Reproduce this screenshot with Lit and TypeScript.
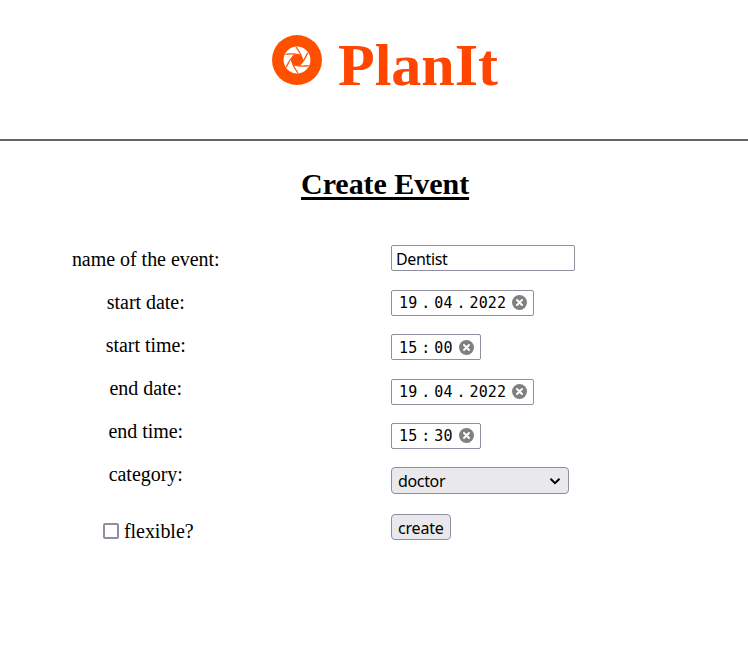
import { LitElement, html, css, svg } from "lit";
import { customElement, property } from "lit/decorators.js";

const clearIcon = svg`<svg class="clear" viewBox="0 0 15 15" width="15" height="15"><circle cx="7.5" cy="7.5" r="7.5" fill="#808080"/><path d="M5 5l5 5M10 5l-5 5" stroke="#fff" stroke-width="2" stroke-linecap="round"/></svg>`;

@customElement("segment-field")
export class SegmentField extends LitElement {
  @property({ type: Array }) parts: string[] = [];
  @property() separator = ".";

  static styles = css`
    :host {
      display: flex;
      align-items: center;
      box-sizing: border-box;
      height: 26px;
      padding: 0 6px 0 7px;
      border: 1px solid #8f8f9d;
      border-radius: 2px;
      background: #fff;
      font: 15px/24px "DejaVu Sans Mono", monospace;
      color: #000;
    }
    .part { padding-top: 1px; white-space: pre; letter-spacing: 0.1px; }
    .sep { width: 17px; padding-top: 1px; text-align: center; }
    .clear { display: block; margin-left: 6px; }
  `;

  render() {
    return html`${this.parts.map(
      (p, i) => html`${i ? html`<span class="sep">${this.separator}</span>` : ""}<span class="part">${p}</span>`
    )}${clearIcon}`;
  }
}

@customElement("app-root")
export class AppRoot extends LitElement {
  static styles = css`
    :host {
      display: block;
      height: 650px;
      overflow: hidden;
      background: #fff;
      color: #000;
      font-family: "Liberation Serif", serif;
    }
    header {
      display: flex;
      box-sizing: border-box;
      height: 141px;
      padding: 35px 0 0 272px;
      border-bottom: 2px solid #66666a;
    }
    .logo { display: block; flex: none; }
    h1 {
      margin: -4px 0 0 16px;
      font-size: 60px;
      line-height: 69px;
      color: #ff4500;
      letter-spacing: 0;
    }
    h2 {
      width: 168px;
      margin: 26px 0 0 301px;
      font-size: 30px;
      line-height: 34px;
      letter-spacing: -0.04px;
      white-space: nowrap;
      text-decoration: underline;
      text-decoration-thickness: 3px;
      text-underline-offset: 3px;
      text-decoration-skip-ink: none;
    }
    form { display: flex; margin-top: 44px; }
    .labels {
      display: flex;
      flex-direction: column;
      align-items: center;
      width: 291.5px;
      margin-right: 99.5px;
      padding-top: 3px;
      gap: 20px;
      font-size: 20px;
      line-height: 23px;
      letter-spacing: -0.03px;
    }
    .check { display: flex; align-items: center; margin-top: 14px; padding-left: 5px; gap: 5px; }
    .box {
      box-sizing: border-box;
      width: 16px;
      height: 16px;
      margin-top: -1px;
      border: 2px solid #8f8f9d;
      border-radius: 2px;
    }
    .fields { display: flex; flex-direction: column; align-items: flex-start; padding-top: 0.4px; gap: 18.4px; }
    .text, .select, .button {
      display: flex;
      align-items: center;
      box-sizing: border-box;
      height: 26px;
      border: 1px solid #8f8f9d;
      font: 16px/24px "Noto Sans", sans-serif;
      letter-spacing: -0.35px;
    }
    .text { width: 184px; padding: 2px 0 0 4px; border-radius: 2px; }
    .select {
      justify-content: space-between;
      width: 178px;
      height: 27px;
      padding: 1px 7px 0 6px;
      border-radius: 4px;
      background: #e9e9ed;
    }
    .button { width: 60px; margin-top: 1.2px; padding: 2px 0 0 6px; border-radius: 4px; background: #e9e9ed; letter-spacing: -0.2px; }
  `;

  private labels = ["name of the event:", "start date:", "start time:", "end date:", "end time:", "category:"];

  render() {
    return html`
      <header>
        <svg class="logo" width="50" height="50" viewBox="-25 -25 50 50">
          <circle r="25" fill="#ff5000" />
          <circle r="13.4" fill="#fff" />
          <path d="M6.2 0L3.1 5.4H-3.1L-6.2 0L-3.1 -5.4H3.1Z" fill="#ff5000" />
          ${[0, 60, 120, 180, 240, 300].map(
            (a) => svg`<path transform="rotate(${a})" d="M3.1 -4.8Q-4 -6.9 -11.6 -5.6" fill="none" stroke="#ff5000" stroke-width="1.2"/>`
          )}
        </svg>
        <h1>PlanIt</h1>
      </header>
      <h2>Create Event</h2>
      <form>
        <div class="labels">
          ${this.labels.map((l) => html`<label>${l}</label>`)}
          <label class="check"><span class="box"></span>flexible?</label>
        </div>
        <div class="fields">
          <div class="text">Dentist</div>
          <segment-field .parts=${["19", "04", "2022"]}></segment-field>
          <segment-field .parts=${["15", "00"]} separator=":"></segment-field>
          <segment-field .parts=${["19", "04", "2022"]}></segment-field>
          <segment-field .parts=${["15", "30"]} separator=":"></segment-field>
          <div class="select">
            doctor
            <svg width="12" height="8" viewBox="0 0 12 8"><path d="M1.5 1.7L6 6.2L10.5 1.7" fill="none" stroke="#000" stroke-width="2" /></svg>
          </div>
          <div class="button">create</div>
        </div>
      </form>
    `;
  }
}
